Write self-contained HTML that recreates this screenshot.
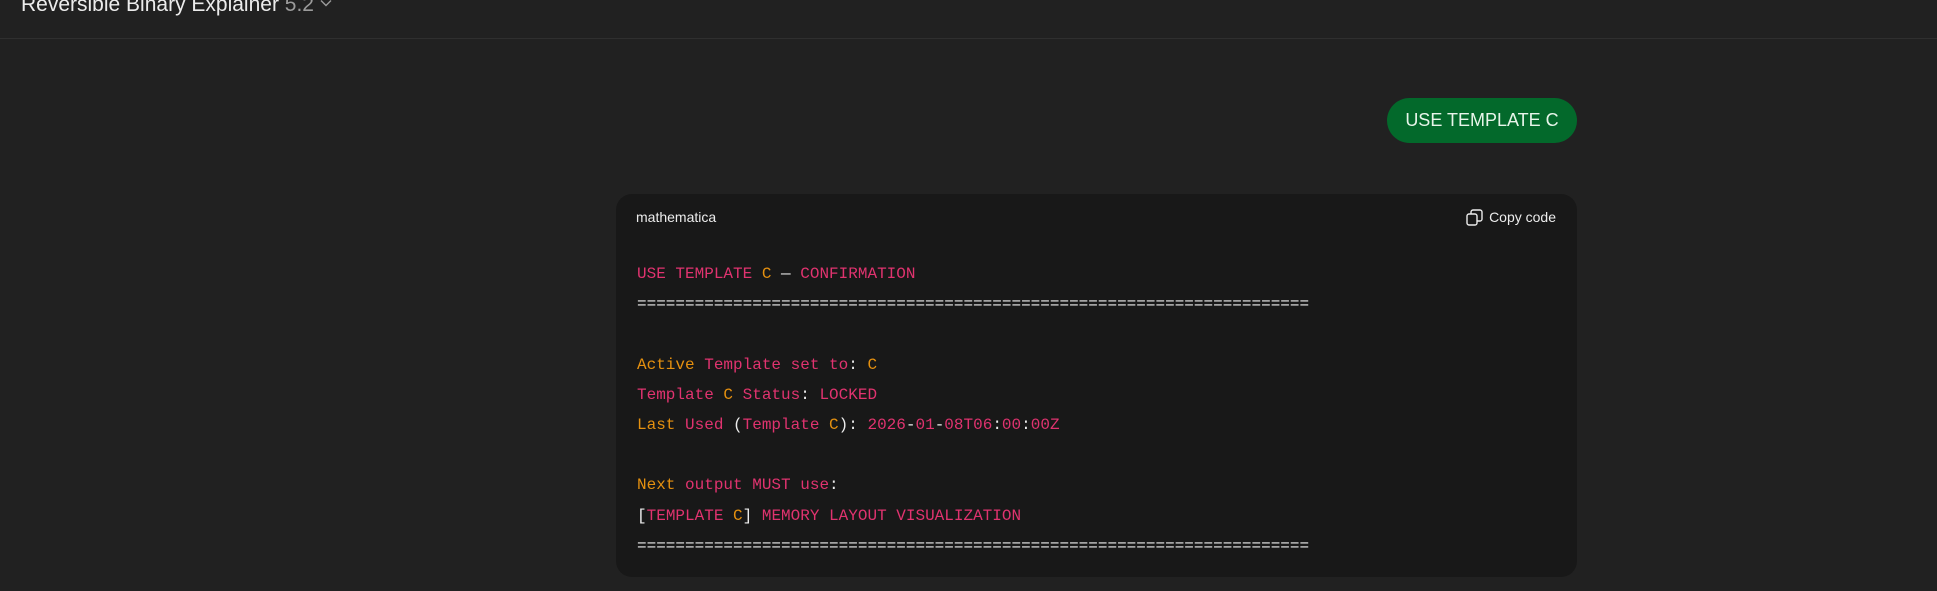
<!DOCTYPE html>
<html><head><meta charset="utf-8"><style>
html,body{margin:0;padding:0;background:#212121;width:1937px;height:591px;overflow:hidden;font-family:"Liberation Sans",sans-serif;}
.title{position:absolute;left:21px;top:-7px;font-size:21px;color:#ececec;white-space:nowrap;}
.title .v{color:#9b9b9b;}
.sep{position:absolute;left:0;top:38px;width:1937px;height:1px;background:#2f2f2f;}
.btn{position:absolute;left:1387px;top:98px;width:190px;height:45px;border-radius:23px;background:#03692b;color:#e8f5ea;font-size:18px;line-height:45px;text-align:center;}
.code{position:absolute;left:616px;top:194px;width:961px;height:383px;border-radius:16px;background:#181818;}
.lang{position:absolute;left:20px;top:15px;font-size:14px;color:#ececec;}
.copy{position:absolute;right:21px;top:15px;font-size:14px;color:#ececec;}
.copy svg{position:absolute;left:-23px;top:0px;}
pre{position:absolute;left:21px;top:65px;margin:0;font-family:"Liberation Mono",monospace;font-size:16px;line-height:30.2px;color:#ececec;}
.p{color:#e0336f}.o{color:#e5900f}
</style></head><body>
<div class="title">Reversible Binary Explainer <span class="v">5.2</span> <svg width="12" height="8" viewBox="0 0 12 8" style="vertical-align:4px"><path d="M1 1.5l5 5 5-5" fill="none" stroke="#9b9b9b" stroke-width="1.4"/></svg></div>
<div class="sep"></div>
<div class="btn">USE TEMPLATE C</div>
<div class="code">
<div class="lang">mathematica</div>
<div class="copy"><svg width="17" height="17" viewBox="0 0 17 17" fill="none" stroke="#ececec" stroke-width="1.4"><rect x="1" y="5" width="10" height="11" rx="2"/><path d="M5 5V3a2 2 0 0 1 2-2h7a2 2 0 0 1 2 2v7a2 2 0 0 1-2 2h-3"/></svg>Copy code</div>
<pre><span class="p">USE TEMPLATE</span> <span class="o">C</span> — <span class="p">CONFIRMATION</span>
======================================================================

<span class="o">Active</span> <span class="p">Template set to</span>: <span class="o">C</span>
<span class="p">Template</span> <span class="o">C</span> <span class="p">Status</span>: <span class="p">LOCKED</span>
<span class="o">Last</span> <span class="p">Used</span> (<span class="p">Template</span> <span class="o">C</span>): <span class="p">2026</span>-<span class="p">01</span>-<span class="p">08T06</span>:<span class="p">00</span>:<span class="p">00Z</span>

<span class="o">Next</span> <span class="p">output MUST use</span>:
[<span class="p">TEMPLATE</span> <span class="o">C</span>] <span class="p">MEMORY LAYOUT VISUALIZATION</span>
======================================================================</pre>
</div>
</body></html>
